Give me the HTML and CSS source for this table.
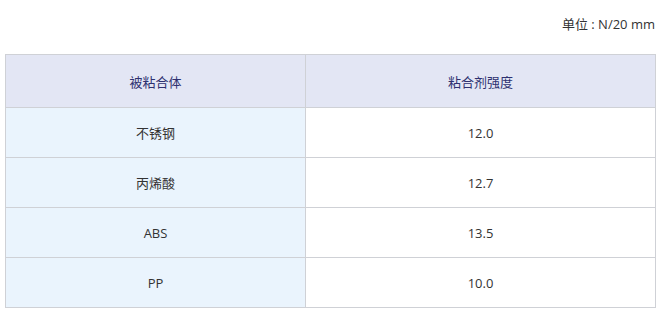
FILE: index.html
```html
<!DOCTYPE html>
<html lang="zh">
<head>
<meta charset="utf-8">
<link rel="stylesheet" href="styles.css">
</head>
<body>
<div class="wrap">
  <p class="unit">单位 : N/20 mm</p>
  <table class="data">
    <colgroup><col class="c1"><col class="c2"></colgroup>
    <thead>
      <tr><th>被粘合体</th><th>粘合剂强度</th></tr>
    </thead>
    <tbody>
      <tr><td class="name">不锈钢</td><td>12.0</td></tr>
      <tr><td class="name">丙烯酸</td><td>12.7</td></tr>
      <tr><td class="name">ABS</td><td>13.5</td></tr>
      <tr><td class="name">PP</td><td>10.0</td></tr>
    </tbody>
  </table>
</div>
</body>
</html>
```

FILE: styles.css
```css
html, body {
  margin: 0;
  padding: 0;
  background: #ffffff;
}
body {
  font-family: "Open Sans", "Noto Sans CJK SC", sans-serif;
  font-size: 13px;
  color: #333333;
}
.wrap {
  padding: 0 5px 0 5px;
}
.unit {
  margin: 0;
  height: 54px;
  box-sizing: border-box;
  padding-top: 15px;
  text-align: right;
  line-height: 18px;
  color: #333333;
  font-size: 13px;
}
.data {
  width: 650px;
  border-collapse: collapse;
  table-layout: fixed;
}
.c1 { width: 300px; }
.c2 { width: 350px; }
.data th, .data td {
  border: 1px solid #cfd1d6;
  text-align: center;
  padding: 0;
  font-weight: normal;
}
.data th {
  background: #e3e6f4;
  color: #2e3170;
  height: 52px;
}
.data td {
  height: 49px;
  background: #ffffff;
  color: #333333;
}
.data td.name {
  background: #eaf4fd;
}
```
